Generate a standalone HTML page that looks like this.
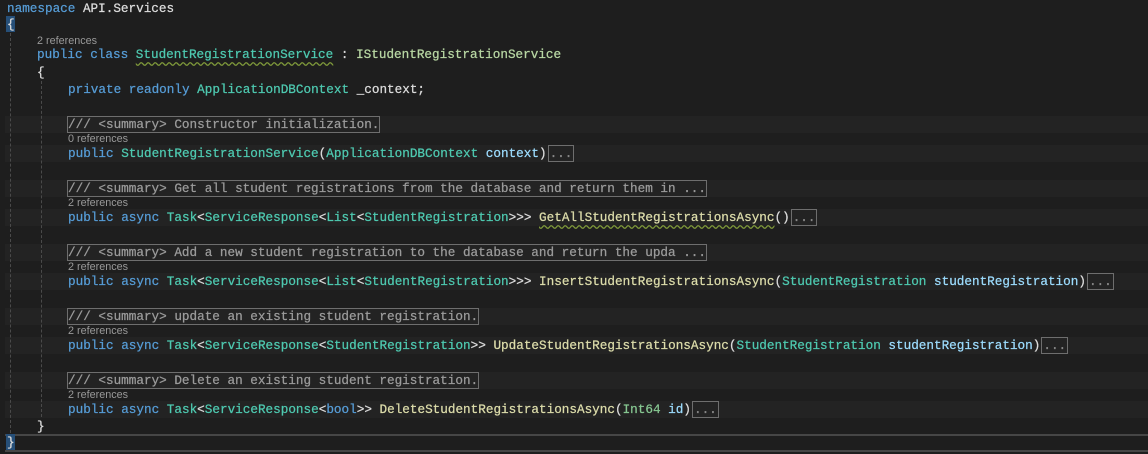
<!DOCTYPE html>
<html><head><meta charset="utf-8"><style>
html,body{margin:0;padding:0;background:#1e1e1e;width:1148px;height:454px;overflow:hidden;position:relative}
.l{position:absolute;left:0;height:17px;line-height:17px;font-family:"Liberation Mono",monospace;font-size:12.67px;color:#dcdcdc;white-space:pre;-webkit-text-stroke:0.25px}
.band{position:absolute;left:5px;right:0;height:17px;background:#232323}
.lens{position:absolute;height:12px;line-height:12px;font-family:"Liberation Sans",sans-serif;font-size:10.8px;color:#999;white-space:pre}
.k{color:#569cd6}.t{color:#4ec9b0}.m{color:#dcdcaa}.p{color:#9cdcfe}.s{color:#86c691}
.c{color:#9b9b9b;outline:1px solid #6e6e6e;outline-offset:0}
.e{color:#888;border:1px solid #6e6e6e;padding:0 1px;margin-left:1px}
.w{text-decoration:underline wavy #7f9a3a;text-underline-offset:3px}
.g{position:absolute;width:0;border-left:1px dashed #4a4a4a}
</style></head><body>
<div class="band" style="top:116px"></div><div class="band" style="top:145px"></div>
<div class="band" style="top:180px"></div><div class="band" style="top:209px"></div>
<div class="band" style="top:244px"></div><div class="band" style="top:273px"></div>
<div class="band" style="top:308px"></div><div class="band" style="top:337px"></div>
<div class="band" style="top:372px"></div><div class="band" style="top:401px"></div>
<div class="g" style="left:10px;top:33px;height:400px"></div>
<div class="g" style="left:41px;top:81px;height:336px"></div>
<div style="position:absolute;left:5px;right:0;top:434px;height:14px;border-top:2px solid #464646;border-bottom:2px solid #464646"></div>
<div style="position:absolute;left:6px;top:16px;width:9px;height:16px;background:#264f78"></div>
<div style="position:absolute;left:6px;top:434px;width:9px;height:16px;background:#264f78"></div>

<div class="l" style="top:0px;left:7px"><span class="k">namespace</span> API.Services</div>
<div class="l" style="top:16px;left:7px">{</div>
<div class="lens" style="top:35px;left:37px">2 references</div>
<div class="l" style="top:46px;left:37px"><span class="k">public</span> <span class="k">class</span> <span class="t w">StudentRegistrationService</span> : <span class="t" style="color:#b8d7a3">IStudentRegistrationService</span></div>
<div class="l" style="top:64px;left:37px">{</div>
<div class="l" style="top:81px;left:68px"><span class="k">private</span> <span class="k">readonly</span> <span class="t">ApplicationDBContext</span> _context;</div>

<div class="l" style="top:116px;left:68px"><span class="c">/// &lt;summary&gt; Constructor initialization.</span></div>
<div class="lens" style="top:133px;left:68px">0 references</div>
<div class="l" style="top:145px;left:68px"><span class="k">public</span> <span class="t">StudentRegistrationService</span>(<span class="t">ApplicationDBContext</span> <span class="p">context</span>)<span class="e">...</span></div>

<div class="l" style="top:180px;left:68px"><span class="c">/// &lt;summary&gt; Get all student registrations from the database and return them in ...</span></div>
<div class="lens" style="top:197px;left:68px">2 references</div>
<div class="l" style="top:209px;left:68px"><span class="k">public</span> <span class="k">async</span> <span class="t">Task</span>&lt;<span class="t">ServiceResponse</span>&lt;<span class="t">List</span>&lt;<span class="t">StudentRegistration</span>&gt;&gt;&gt; <span class="m w">GetAllStudentRegistrationsAsync</span>()<span class="e">...</span></div>

<div class="l" style="top:244px;left:68px"><span class="c">/// &lt;summary&gt; Add a new student registration to the database and return the upda ...</span></div>
<div class="lens" style="top:261px;left:68px">2 references</div>
<div class="l" style="top:273px;left:68px"><span class="k">public</span> <span class="k">async</span> <span class="t">Task</span>&lt;<span class="t">ServiceResponse</span>&lt;<span class="t">List</span>&lt;<span class="t">StudentRegistration</span>&gt;&gt;&gt; <span class="m">InsertStudentRegistrationsAsync</span>(<span class="t">StudentRegistration</span> <span class="p">studentRegistration</span>)<span class="e">...</span></div>

<div class="l" style="top:308px;left:68px"><span class="c">/// &lt;summary&gt; update an existing student registration.</span></div>
<div class="lens" style="top:325px;left:68px">2 references</div>
<div class="l" style="top:337px;left:68px"><span class="k">public</span> <span class="k">async</span> <span class="t">Task</span>&lt;<span class="t">ServiceResponse</span>&lt;<span class="t">StudentRegistration</span>&gt;&gt; <span class="m">UpdateStudentRegistrationsAsync</span>(<span class="t">StudentRegistration</span> <span class="p">studentRegistration</span>)<span class="e">...</span></div>

<div class="l" style="top:372px;left:68px"><span class="c">/// &lt;summary&gt; Delete an existing student registration.</span></div>
<div class="lens" style="top:389px;left:68px">2 references</div>
<div class="l" style="top:401px;left:68px"><span class="k">public</span> <span class="k">async</span> <span class="t">Task</span>&lt;<span class="t">ServiceResponse</span>&lt;<span class="k">bool</span>&gt;&gt; <span class="m">DeleteStudentRegistrationsAsync</span>(<span class="s">Int64</span> <span class="p">id</span>)<span class="e">...</span></div>
<div class="l" style="top:418px;left:37px">}</div>
<div class="l" style="top:434px;left:7px">}</div>
</body></html>
